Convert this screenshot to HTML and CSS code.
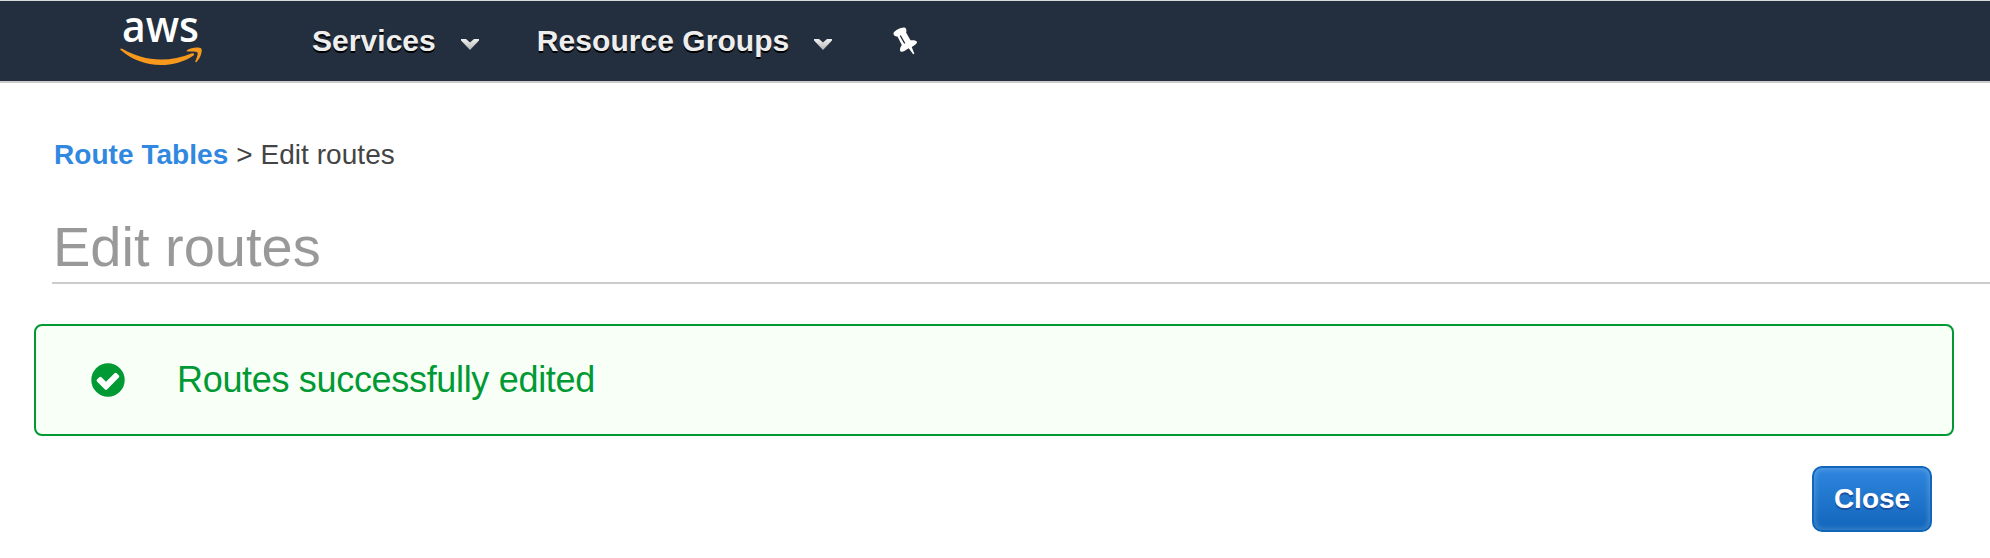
FILE: index.html
```html
<!DOCTYPE html>
<html lang="en">
<head>
<meta charset="utf-8">
<title>Edit routes</title>
<link rel="stylesheet" href="styles.css">
</head>
<body>
<header class="nav">
  <svg class="logo" width="84" height="80" viewBox="0 -15 84 80" role="img" aria-label="aws">
    <text class="logo-text" x="2" y="26" textLength="77" lengthAdjust="spacingAndGlyphs">aws</text>
    <path fill="#f8991d" d="M.2 33.200c.6-.9 1.600-.6 2.500-.1C15 40 27 43.600 41 43.600c10 0 21-2.200 31-6.300 1.700-.7 3 .9 1.500 2.100C64.500 45.800 52 49 41 49 25.500 49 11.500 43.300 1 34.200c-.4-.3-.9-.6-.8-1z"/>
    <path fill="#f8991d" d="M67 34.200c4-3 12.500-3.300 14.200-1.600 1.600 1.900-.5 9.600-4.600 13.300-.7.600-1.700.3-1.300-.6 1-2.500 3.100-7.600 2.200-8.900-1-1.300-6.700-1-9.600-.9-1 .1-1.700-.7-.9-1.300z"/>
  </svg>
  <a class="nav-item services">Services
    <svg class="caret" width="18" height="11" viewBox="0 0 18 11"><path fill="url(#caret-fill)" d="M0 0H5L9 3.500 13 0H18V1.500L9 11 0 1.500z"/></svg>
  </a>
  <a class="nav-item">Resource Groups
    <svg class="caret" width="18" height="11" viewBox="0 0 18 11">
      <defs><linearGradient id="caret-fill" x1="0" y1="0" x2="0" y2="1"><stop offset="0" stop-color="#f0f0f0"/><stop offset="1" stop-color="#b5b5b5"/></linearGradient></defs>
      <path fill="url(#caret-fill)" d="M0 0H5L9 3.500 13 0H18V1.500L9 11 0 1.500z"/>
    </svg>
  </a>
  <svg class="pin" width="25" height="28" viewBox="0 0 25 28">
    <path fill="#fff" d="M.8 5.500C2 3.500 8 .2 11.200.5c2.100.2 2.600 2.500 1.900 5L17.500 13.300c2.500-.3 6.500-.1 6.500 2 0 1.400-2.300 3.100-5.300 4.600L21.300 26.500 20.800 27.300 20 27 15.700 21.200C12.500 23.500 9 25.700 7.600 24.500c-1.300-1.300-.3-4.400 1.200-6.500L4.500 9.600C2.100 9.500-.4 7.700.8 5.500z"/>
    <path fill="none" stroke="#232f3e" stroke-width="1.400" stroke-linecap="round" d="M7.500 9 11.500 16"/>
  </svg>
</header>
<main class="page">
  <nav class="crumbs"><a class="crumb-link">Route Tables</a> &gt; Edit routes</nav>
  <h1 class="title">Edit routes</h1>
  <section class="alert">
    <svg class="check" width="34" height="34" viewBox="0 0 34 34">
      <circle cx="17" cy="17" r="16.700" fill="#093"/>
      <path fill="#fff" d="M6 16.500 8.300 14.200q1.100-1 2.200 0L15 18.700 23.500 10.200q1.100-1 2.200 0L27.800 12.300q1 1.100 0 2.200L16 26.500q-1 .9-2 0L6 18.500q-.9-1 0-2z"/>
    </svg>
    <span class="message">Routes successfully edited</span>
  </section>
  <div class="actions"><button class="close">Close</button></div>
</main>
</body>
</html>
```
FILE: styles.css
```css
* { box-sizing: border-box; }

body {
  margin: 0;
  height: 558px;
  overflow: hidden;
  background: #fff;
  color: #444;
  font-family: "Liberation Sans", Arial, sans-serif;
}

.nav {
  display: flex;
  align-items: flex-start;
  height: 83px;
  padding-left: 120px;
  background: #232f3e;
  border-top: 1px solid #d5dbdb;
  border-bottom: 2px solid #ccc;
}

.logo {
  overflow: visible;
}

.logo-text {
  fill: #fff;
  font: 600 43px/1 "Open Sans", "Noto Sans", sans-serif;
}

.nav-item {
  display: flex;
  align-items: center;
  gap: 25px;
  margin-top: 22px;
  margin-right: 61px;
  color: #eee;
  font-size: 30px;
  font-weight: bold;
  line-height: 36px;
  letter-spacing: 0.05px;
  white-space: nowrap;
  text-shadow: 0 2px 0 #000;
}

.services {
  margin-left: 108px;
  margin-right: 58px;
}

.caret {
  margin-top: 6px;
}

.pin {
  margin-top: 26px;
}

.page {
  padding: 54px 36px 0 34px;
}

.crumbs {
  padding-left: 20px;
  font-size: 28px;
  letter-spacing: 0.05px;
  line-height: 36px;
}

.crumb-link {
  color: #3088e0;
  font-weight: bold;
}

.title {
  margin: 37px -36px 40px 18px;
  height: 74px;
  padding-left: 1px;
  border-bottom: 2px solid #ccc;
  color: #999;
  font-size: 56px;
  font-weight: normal;
  line-height: 74px;
}

.alert {
  display: flex;
  align-items: center;
  gap: 52px;
  height: 112px;
  padding-left: 55px;
  border: 2px solid #093;
  border-radius: 8px;
  background: #f7fff7;
  color: #093;
  font-size: 36px;
}

.message {
  letter-spacing: -0.32px;
}

.actions {
  display: flex;
  justify-content: flex-end;
  padding: 30px 22px 0 0;
}

.close {
  width: 120px;
  height: 66px;
  padding: 0;
  border: 2px solid #1166bb;
  border-radius: 10px;
  background: linear-gradient(#2f86de, #1166bb);
  box-shadow: inset 0 0 6px rgba(255, 255, 255, 0.3);
  color: #fff;
  font: bold 28px "Liberation Sans", Arial, sans-serif;
  text-shadow: 0 2px 0 #1a4fa0;
}
```
